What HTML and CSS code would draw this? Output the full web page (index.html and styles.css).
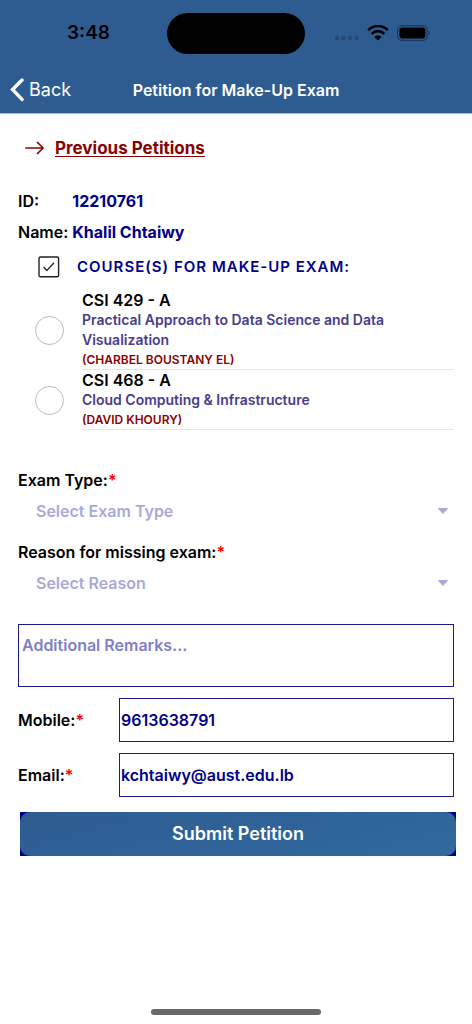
FILE: index.html
```html
<!DOCTYPE html>
<html lang="en">
<head>
<meta charset="utf-8">
<meta name="viewport" content="width=device-width, initial-scale=1">
<title>Petition for Make-Up Exam</title>
<link rel="stylesheet" href="styles.css">
</head>
<body>
<div class="screen">
  <header class="header">
    <div class="status">
      <span class="time">3:48</span>
      <span class="island"></span>
      <div class="status-icons">
        <svg width="26" height="6" viewBox="0 0 26 6" fill="#27496f" aria-hidden="true"><circle cx="3" cy="3" r="2.2"/><circle cx="9.5" cy="3" r="2.2"/><circle cx="16" cy="3" r="2.2"/><circle cx="22.5" cy="3" r="2.2"/></svg>
        <svg class="wifi" width="22" height="17" viewBox="0 0 22 17" aria-hidden="true"><path d="M1.2 5.1a13.8 13.8 0 0 1 19.6 0M4.7 8.8a8.8 8.8 0 0 1 12.6 0" fill="none" stroke="#000" stroke-width="2.6"/><path d="M7.4 11.9a5.2 5.2 0 0 1 7.2 0L11 15.5z"/></svg>
        <svg class="battery" width="34" height="17" viewBox="0 0 34 17" aria-hidden="true"><rect x=".6" y=".6" width="29.6" height="14.8" rx="4.6" fill="none" stroke="#1c395b" stroke-width="1.2"/><rect x="2.4" y="2.6" width="26" height="10.8" rx="2.8"/><path d="M31.6 5.6c1.8.8 1.8 4 0 4.8z" fill="#1c395b"/></svg>
      </div>
    </div>
    <nav class="nav">
      <button class="back" type="button">
        <svg width="14" height="24" viewBox="0 0 14 24" fill="none" stroke="#fff" stroke-width="3.4" stroke-linecap="round" aria-hidden="true"><path d="M12 2L2.6 11.6l9.4 9.8"/></svg>
        Back
      </button>
      <h1 class="title">Petition for Make-Up Exam</h1>
    </nav>
  </header>

  <main class="content">
    <div class="previous">
      <svg width="20" height="14" viewBox="0 0 20 14" fill="none" stroke="#8b0000" stroke-width="1.5" stroke-linecap="round" stroke-linejoin="round" aria-hidden="true"><path d="M.8 7h17.4M12.4 1.4L18.2 7l-5.8 5.6"/></svg>
      <a href="#">Previous Petitions</a>
    </div>

    <dl class="student">
      <dt>ID:</dt><dd>12210761</dd>
      <dt>Name:</dt><dd>Khalil Chtaiwy</dd>
    </dl>

    <form class="form">
      <fieldset class="courses">
        <legend class="courses-title">
          <svg width="22" height="22" viewBox="0 0 22 22" fill="none" stroke="#222" stroke-width="1.4" stroke-linecap="round" stroke-linejoin="round" aria-hidden="true"><rect x="1" y="1" width="19.6" height="19.8" rx="1.4"/><path d="M6 11.4l3 3 6.6-7.2"/></svg>
          <span>COURSE(S) FOR MAKE-UP EXAM:</span>
        </legend>
        <label class="course">
          <input type="radio" name="course" value="csi429">
          <span class="course-body">
            <span class="code">CSI 429 - A</span>
            <span class="name">Practical Approach to Data Science and Data Visualization</span>
            <span class="teacher">(CHARBEL BOUSTANY EL)</span>
          </span>
        </label>
        <label class="course">
          <input type="radio" name="course" value="csi468">
          <span class="course-body">
            <span class="code">CSI 468 - A</span>
            <span class="name">Cloud Computing &amp; Infrastructure</span>
            <span class="teacher">(DAVID KHOURY)</span>
          </span>
        </label>
      </fieldset>

      <div class="field">
        <label for="type">Exam Type:<span class="req">*</span></label>
        <div class="picker">
          <select id="type"><option>Select Exam Type</option></select>
          <svg width="12" height="6" viewBox="0 0 12 6" fill="#a9a9da" aria-hidden="true"><path d="M.5 0h11L6 6z"/></svg>
        </div>
      </div>
      <div class="field">
        <label for="reason">Reason for missing exam:<span class="req">*</span></label>
        <div class="picker">
          <select id="reason"><option>Select Reason</option></select>
          <svg width="12" height="6" viewBox="0 0 12 6" fill="#a9a9da" aria-hidden="true"><path d="M.5 0h11L6 6z"/></svg>
        </div>
      </div>

      <textarea class="remarks" aria-label="Additional Remarks" placeholder="Additional Remarks..."></textarea>

      <div class="row">
        <label for="mobile">Mobile:<span class="req">*</span></label>
        <input id="mobile" type="tel" value="9613638791">
      </div>
      <div class="row">
        <label for="email">Email:<span class="req">*</span></label>
        <input id="email" type="email" value="kchtaiwy@aust.edu.lb">
      </div>
      <div class="submit-wrap">
        <button class="submit" type="submit">Submit Petition</button>
      </div>
    </form>
  </main>
  <div class="home"></div>
</div>
</body>
</html>
```
FILE: styles.css
```css
* { box-sizing: border-box; }
body, h1, dl, dd, fieldset { margin: 0; }
body {
  background: #fff;
  color: #000;
  font: 600 16px/24px Inter, "Liberation Sans", sans-serif;
}
button, input, select, textarea { font: inherit; }
svg { display: block; flex: none; }

.screen {
  display: flex;
  flex-direction: column;
  min-height: 100vh;
}
.header {
  background: #2e5c91;
  border-bottom: 1px solid #a9b8cf;
  color: #fff;
}
.status {
  display: grid;
  grid-template-columns: 1fr auto 1fr;
  align-items: center;
  height: 66px;
}
.time {
  padding-left: 10px;
  color: #000;
  font-size: 19px;
  text-align: center;
}
.island {
  width: 138px;
  height: 41px;
  border-radius: 21px;
  background: #000;
}
.status-icons {
  display: flex;
  align-items: center;
  padding-left: 29px;
}
.status-icons svg:first-child { margin-top: 9px; }
.wifi { margin-left: 7px; }
.battery { margin-left: 8px; }
.nav {
  display: grid;
  grid-template-columns: 1fr auto 1fr;
  align-items: center;
  height: 47px;
}
.back {
  display: flex;
  align-items: center;
  gap: 5px;
  padding: 0 0 0 10px;
  border: 0;
  background: none;
  color: #fff;
  font-size: 18px;
  font-weight: 400;
}
.title { font-size: 16px; font-weight: 600; }

.content { padding: 22px 18px; }
.previous {
  display: flex;
  align-items: center;
  gap: 10px;
  padding-left: 7px;
}
.previous a {
  color: #8b0000;
  font-size: 17px;
  font-weight: 700;
  text-underline-offset: 2px;
  text-decoration-thickness: 1px;
}
.student {
  display: grid;
  grid-template-columns: auto 1fr;
  gap: 7px 4px;
  margin-top: 29px;
}
.student dd { color: #00008b; font-weight: 700; }

.courses {
  margin-top: 11px;
  padding: 0;
  border: 0;
}
.courses-title {
  display: flex;
  align-items: center;
  gap: 17px;
  padding: 0 0 0 20px;
  color: #00008b;
  font-size: 15px;
  letter-spacing: 1px;
}
.course {
  display: flex;
  align-items: center;
  gap: 18px;
  padding-left: 17px;
}
.courses-title + .course { margin-top: 11px; }
.course input {
  flex: none;
  width: 29px;
  height: 29px;
  margin: 0;
  appearance: none;
  border: 1px solid #bbb;
  border-radius: 50%;
}
.course input:checked { background: #2e5c91; }
.course-body {
  display: flex;
  flex: 1;
  flex-direction: column;
  border-bottom: 1px solid #e6e6e8;
  line-height: 20px;
}
.code { font-size: 16px; }
.name { color: #483d8b; font-size: 14px; }
.teacher { color: #8b0000; font-size: 12px; line-height: 19px; }

.field { margin-top: 10px; }
.courses + .field { margin-top: 38px; }
.field label { display: block; }
.req { color: #f00; }
.picker {
  display: flex;
  align-items: center;
  justify-content: space-between;
  height: 38px;
  padding: 0 5px 0 18px;
}
.picker select {
  flex: 1;
  padding: 0;
  appearance: none;
  border: 0;
  background: none;
  color: #a9a9da;
}
.remarks {
  display: block;
  width: 100%;
  height: 63px;
  margin-top: 22px;
  padding: 8px 3px;
  border: 1px solid #1a1a96;
  background: none;
  color: #00008b;
  resize: none;
}
.remarks::placeholder { color: #8080c5; opacity: 1; }
.row {
  display: grid;
  grid-template-columns: 101px 1fr;
  align-items: center;
  margin-top: 11px;
}
.row input {
  width: 100%;
  height: 44px;
  padding: 0 1px;
  border: 1px solid #1a1a96;
  border-radius: 0;
  background: none;
  color: #00008b;
}
.submit-wrap {
  margin: 15px -2px 0 2px;
  background: #00008b;
}
.submit {
  display: block;
  width: 100%;
  height: 44px;
  border: 0;
  border-radius: 10px;
  background: linear-gradient(165deg, #2e5c91, #31699f);
  color: #fff;
  font-size: 18px;
}
.home {
  width: 36%;
  height: 6px;
  margin: auto auto 9px;
  border-radius: 3px;
  background: #686868;
}
```
